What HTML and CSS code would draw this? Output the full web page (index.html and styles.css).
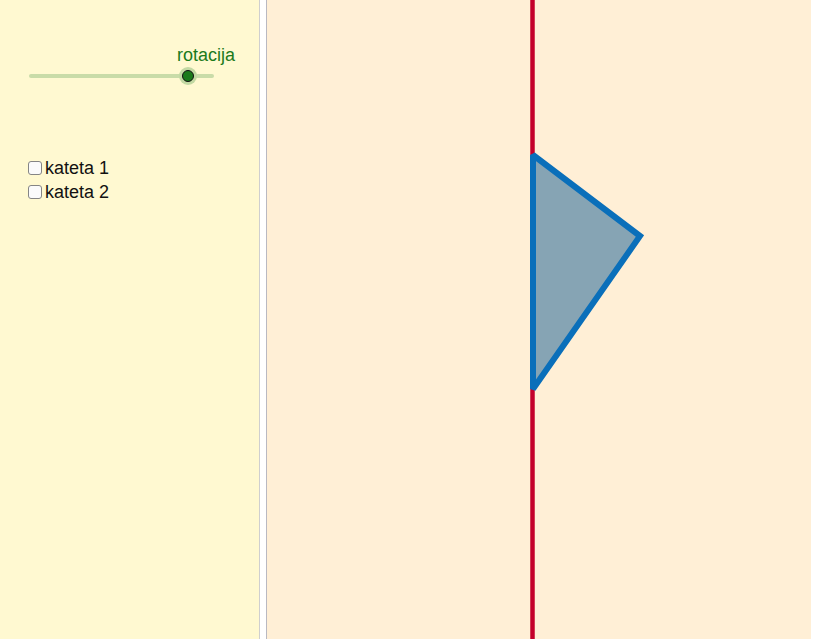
FILE: index.html
```html
<!DOCTYPE html>
<html>
<head>
<meta charset="utf-8">
<link rel="stylesheet" href="styles.css">
</head>
<body>
<div class="app">
  <div class="panel">
    <div class="slider-label">rotacija</div>
    <svg class="slider" width="259" height="20" viewBox="0 0 259 20">
      <line x1="31" y1="10" x2="212" y2="10" stroke="#c9dca8" stroke-width="4" stroke-linecap="round"/>
      <circle cx="188" cy="10" r="9" fill="#c3d9a3"/>
      <circle cx="188" cy="10" r="5.5" fill="#1b7a1b" stroke="#111" stroke-width="1"/>
    </svg>
    <label class="check-row"><span class="box"></span>kateta 1</label>
    <label class="check-row"><span class="box"></span>kateta 2</label>
  </div>
  <div class="canvas">
    <svg width="544" height="639" viewBox="0 0 544 639">
      <line x1="265.5" y1="0" x2="265.5" y2="639" stroke="#c4002b" stroke-width="4.5"/>
      <polygon points="266,155 373,236 266,389" fill="#86a4b4" stroke="#0a6fba" stroke-width="6" stroke-linejoin="miter" stroke-miterlimit="2"/>
    </svg>
  </div>
</div>
</body>
</html>
```
FILE: styles.css
```css
html, body {
  margin: 0;
  padding: 0;
  background: #ffffff;
}
body {
  font-family: "Liberation Sans", Arial, sans-serif;
  font-size: 18px;
}
.app {
  display: flex;
  height: 639px;
  width: 812px;
}
.panel {
  width: 259px;
  height: 639px;
  background: #fff9d1;
  border-right: 1px solid #cfcfcf;
  flex: none;
}
.slider-label {
  margin-top: 45px;
  padding-left: 177px;
  line-height: 20px;
  height: 20px;
  color: #1c7a1c;
}
.slider {
  display: block;
  margin-top: 1px;
}
.check-row {
  display: flex;
  align-items: center;
  height: 24px;
  line-height: 24px;
  padding-left: 28px;
  color: #111;
}
.check-row:first-of-type {
  margin-top: 70px;
}
.box {
  display: inline-block;
  width: 12px;
  height: 12px;
  border: 1.5px solid #858585;
  border-radius: 3px;
  background: #fbfbfb;
  margin-right: 3px;
  box-sizing: content-box;
}
.canvas {
  margin-left: 6px;
  width: 544px;
  height: 639px;
  border-left: 1px solid #b9b9c2;
  background: #ffefd6;
  flex: none;
}
.canvas svg {
  display: block;
}
```
